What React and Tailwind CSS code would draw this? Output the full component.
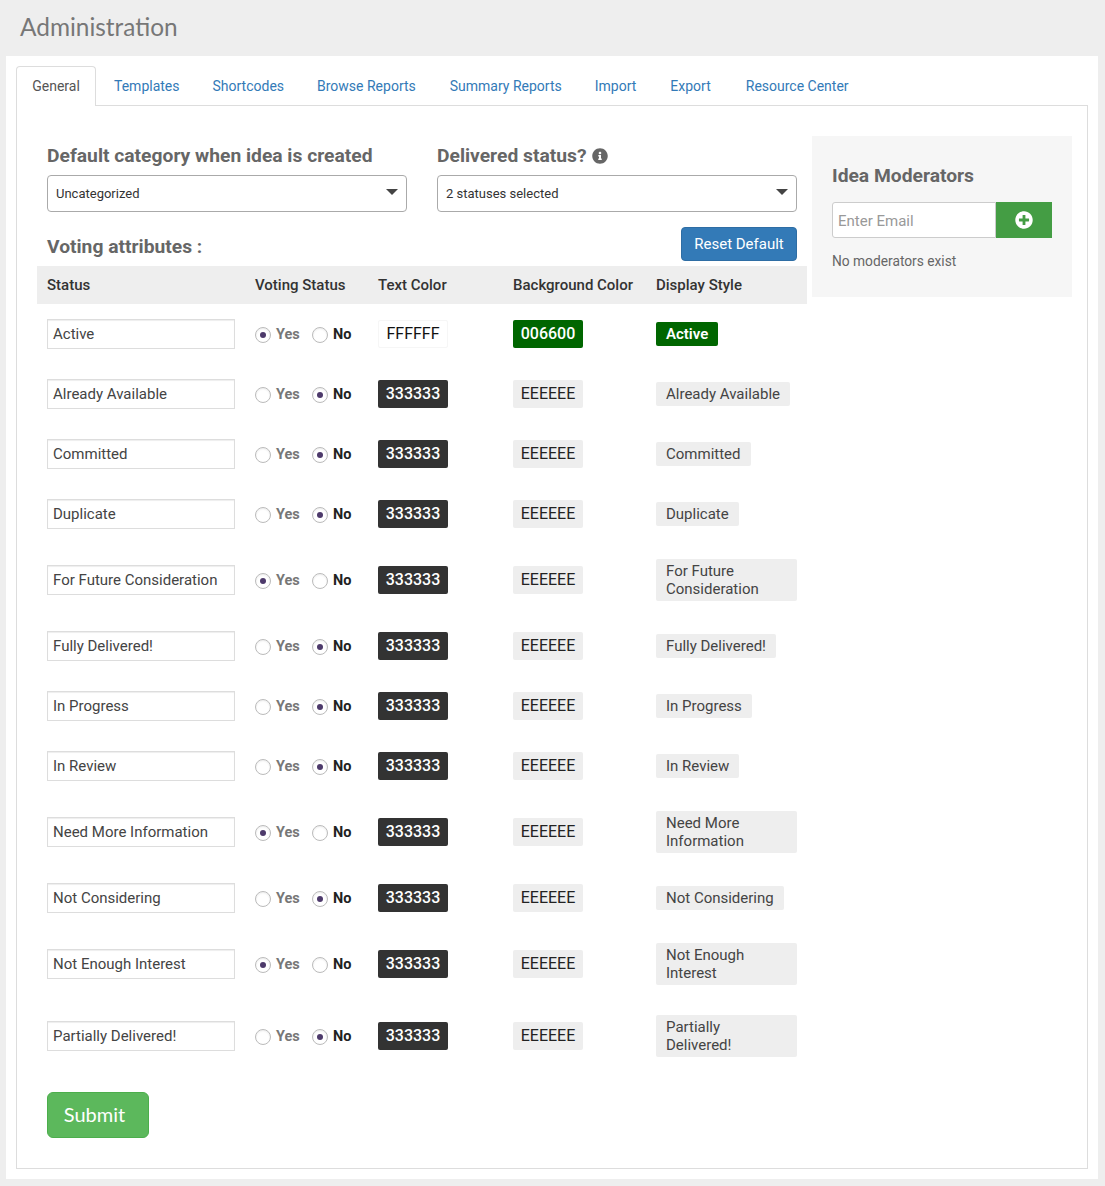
import React from "react";
import { FaInfoCircle, FaPlusCircle } from "react-icons/fa";

const tabs = [
  ["Templates", "ml-[18px]"],
  ["Shortcodes", "ml-[33px]"],
  ["Browse Reports", "ml-[33px]"],
  ["Summary Reports", "ml-[34px]"],
  ["Import", "ml-[33px]"],
  ["Export", "ml-[34px]"],
  ["Resource Center", "ml-[35px]"],
];

const rows = [
  { name: "Active", vote: "yes", active: true },
  { name: "Already Available", vote: "no" },
  { name: "Committed", vote: "no" },
  { name: "Duplicate", vote: "no" },
  { name: "For Future Consideration", vote: "yes" },
  { name: "Fully Delivered!", vote: "no" },
  { name: "In Progress", vote: "no" },
  { name: "In Review", vote: "no" },
  { name: "Need More Information", vote: "yes" },
  { name: "Not Considering", vote: "no" },
  { name: "Not Enough Interest", vote: "yes" },
  { name: "Partially Delivered!", vote: "no" },
];

const gridCols = "grid grid-cols-[208px_123px_135px_143px_161px]";

function Radio({ on }) {
  return (
    <span className="flex h-4 w-4 shrink-0 items-center justify-center rounded-full border border-[#bbbbbb] bg-white shadow-[inset_0_1px_2px_rgba(0,0,0,0.08)]">
      {on && <span className="h-[6px] w-[6px] rounded-full bg-[#4d3a6b]" />}
    </span>
  );
}

function Select({ value }) {
  return (
    <div className="flex h-[37px] w-[360px] items-center justify-between rounded-[4px] border border-[#aaaaaa] bg-white pl-2 pr-[8px] text-[13px] text-[#333]">
      <span>{value}</span>
      <span className="mb-[3px] h-0 w-0 border-x-[6px] border-t-[6px] border-x-transparent border-t-[#444]" />
    </div>
  );
}

function Row({ row }) {
  const yes = row.vote === "yes";
  return (
    <div className={`${gridCols} items-center py-[15px]`}>
      <div className="pl-[10px]">
        <div className="flex h-[30px] w-[188px] items-center border border-[#dddddd] bg-white pl-[5px] text-[15px] text-[#444] shadow-[inset_0_1px_1px_rgba(0,0,0,0.07)]">
          {row.name}
        </div>
      </div>
      <div className="flex h-5 items-center pl-[10px] pt-[2px] text-[14.5px] font-bold">
        <Radio on={yes} />
        <span className="ml-[5px] w-[23px] text-[#777]">Yes</span>
        <span className="ml-[13px]"><Radio on={!yes} /></span>
        <span className="ml-[5px] text-[#222]">No</span>
      </div>
      <div className="pl-[10px]">
        {row.active ? (
          <div className="flex h-7 w-[70px] items-center justify-center rounded-[2px] border border-[#f6f6f6] bg-white text-[16px] text-[#111]">FFFFFF</div>
        ) : (
          <div className="flex h-7 w-[70px] items-center justify-center rounded-[2px] bg-[#333333] text-[16px] font-medium text-white">333333</div>
        )}
      </div>
      <div className="pl-[10px]">
        {row.active ? (
          <div className="flex h-7 w-[70px] items-center justify-center rounded-[2px] bg-[#006600] text-[16px] font-medium text-white">006600</div>
        ) : (
          <div className="flex h-7 w-[70px] items-center justify-center rounded-[2px] bg-[#eeeeee] text-[16px] text-[#222]">EEEEEE</div>
        )}
      </div>
      <div className="pl-[10px] pr-[10px]">
        <span className={`inline-block rounded-[2px] px-[10px] py-[3px] text-[15px] leading-[18px] ${row.active ? "bg-[#006600] font-semibold text-white" : "bg-[#eeeeee] text-[#444]"}`}>
          {row.name}
        </span>
      </div>
    </div>
  );
}

export default function App() {
  return (
    <div className="min-h-[1186px] bg-[#eeeeee] font-['Roboto',sans-serif] text-[14px] text-[#333]">
      <div className="flex h-14 items-center pb-[2px] pl-5 font-['Lato',sans-serif] text-[24.4px] text-[#777]">Administration</div>
      <div className="ml-[6px] h-[1123px] w-[1092px] bg-white p-[10px]">
        <div className="relative z-10 flex h-10 items-center text-[14px] text-[#337ab7]">
          <div className="flex h-10 w-20 items-center justify-center rounded-t-[4px] border border-b-0 border-[#dddddd] bg-white text-[#555]">General</div>
          {tabs.map(([t, m]) => (
            <span key={t} className={m}>{t}</span>
          ))}
        </div>
        <div className="-mt-px flex h-[1064px] w-[1072px] border border-[#dddddd] pl-5 pt-[30px]">
          <div className="w-[770px]">
            <div className="flex gap-[30px] pl-[10px]">
              <div>
                <h2 className="mb-[9px] mt-[10px] text-[19.25px] font-bold leading-[20px] text-[#666]">Default category when idea is created</h2>
                <Select value="Uncategorized" />
              </div>
              <div>
                <h2 className="mb-[9px] mt-[10px] flex items-center gap-[6px] text-[19.25px] font-bold leading-[20px] text-[#666]">Delivered status? <FaInfoCircle className="h-4 w-4 text-[#666]" /></h2>
                <Select value="2 statuses selected" />
              </div>
            </div>
            <div className="mb-[5px] mt-[15px] flex h-[34px] items-center justify-between pl-[10px] pr-[10px]">
              <h2 className="pt-[7px] text-[19.25px] font-bold text-[#666]">Voting attributes :</h2>
              <button className="h-[34px] w-[116px] rounded-[4px] border border-[#2e6da4] bg-[#337ab7] text-[15px] text-white">Reset Default</button>
            </div>
            <div className={`${gridCols} h-[38px] items-center bg-[#eeeeee] text-[15px] font-medium text-[#333]`}>
              <div className="pl-[10px]">Status</div>
              <div className="pl-[10px]">Voting Status</div>
              <div className="pl-[10px]">Text Color</div>
              <div className="pl-[10px]">Background Color</div>
              <div className="pl-[10px]">Display Style</div>
            </div>
            {rows.map((r) => (
              <Row key={r.name} row={r} />
            ))}
            <button className="ml-[10px] mt-5 h-[46px] w-[102px] rounded-[6px] border border-[#4cae4c] bg-[#5cb85c] pb-[3px] pr-[7px] font-['Lato',sans-serif] text-[20px] text-white">Submit</button>
          </div>
          <div className="ml-[5px] h-[161px] w-[260px] bg-[#f6f6f6] px-5 pt-[28px]">
            <h2 className="text-[19.25px] font-bold leading-[24px] text-[#666]">Idea Moderators</h2>
            <div className="mt-[14px] flex h-9">
              <div className="flex w-[164px] items-center rounded-l-[3px] border border-[#cccccc] bg-white pl-[5px] pt-[3px] text-[15px] text-[#999]">Enter Email</div>
              <div className="flex w-[56px] items-center justify-center bg-[#449d44]"><FaPlusCircle className="h-[18px] w-[18px] text-white" /></div>
            </div>
            <p className="mt-[13px] text-[13.75px] text-[#666]">No moderators exist</p>
          </div>
        </div>
      </div>
    </div>
  );
}
